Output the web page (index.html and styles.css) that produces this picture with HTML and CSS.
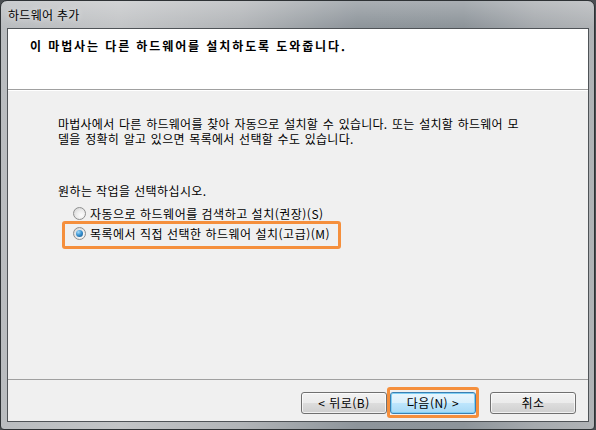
FILE: index.html
```html
<!DOCTYPE html>
<html lang="ko">
<head>
    <meta charset="UTF-8">
    <title>하드웨어 추가</title>
    <link rel="stylesheet" href="styles.css">
</head>
<body>
    <div class="window">
        <div class="titlebar"><span class="title">하드웨어 추가</span></div>
        <div class="client">
            <div class="header">
                <h1>이 마법사는 다른 하드웨어를 설치하도록 도와줍니다.</h1>
            </div>
            <div class="content">
                <p class="intro">
                    <span class="line">마법사에서 다른 하드웨어를 찾아 자동으로 설치할 수 있습니다. 또는 설치할 하드웨어 모</span>
                    <span class="line">델을 정확히 알고 있으면 목록에서 선택할 수도 있습니다.</span>
                </p>
                <p class="ask">원하는 작업을 선택하십시오.</p>
                <label class="option"><span class="radio"></span>자동으로 하드웨어를 검색하고 설치(권장)(S)</label>
                <label class="option option2 marked"><span class="radio checked"></span>목록에서 직접 선택한 하드웨어 설치(고급)(M)</label>
            </div>
            <div class="footer">
                <button class="btn">&lt; 뒤로(B)</button>
                <button class="btn btn-default marked">다음(N) &gt;</button>
                <button class="btn btn-cancel">취소</button>
            </div>
        </div>
    </div>
</body>
</html>
```

FILE: styles.css
```css
*{
    margin: 0;
    padding: 0;
    box-sizing: border-box;
}
body{
    background: #4a4e52;
    font-family: "Noto Sans CJK KR", "Noto Sans", sans-serif;
    font-size: 12px;
    color: #000;
}
.window{
    width: 595px;
    height: 430px;
    border: 1px solid #2e3235;
    border-radius: 7px 7px 4px 4px;
    padding: 0 5px 7px 6px;
    display: flex;
    flex-direction: column;
    background:
        linear-gradient(to bottom, rgba(255,255,255,0.25), rgba(255,255,255,0) 26px),
        linear-gradient(to right, #b9bcbf 0%, #c3c5c7 20%, #b2b5b8 40%, #8e959b 60%, #8d949a 78%, #a6aaae 90%, #b0b3b6 100%);
}
.titlebar{
    height: 27px;
    padding: 6px 0 0 1px;
    line-height: 15px;
}
.title{
    letter-spacing: 0.3px;
    text-shadow: 0 0 6px rgba(255,255,255,0.8);
}
.client{
    height: 394px;
    border: 1px solid #4f5357;
    background: #f0f0f0;
    display: flex;
    flex-direction: column;
}
.header{
    height: 61px;
    background: #fff;
    border-bottom: 1px solid #a0a0a0;
    padding: 9px 0 0 22px;
}
.header h1{
    font-size: 12px;
    font-weight: bold;
    line-height: 15px;
    letter-spacing: 1.9px;
}
.content{
    height: 290px;
    border-top: 1px solid #fff;
    border-bottom: 1px solid #a0a0a0;
    padding: 25px 0 0 50px;
}
.intro{
    letter-spacing: 0.25px;
    word-spacing: 1px;
}
.intro .line{
    display: block;
    height: 15px;
    line-height: 15px;
}
.ask{
    margin-top: 37px;
    line-height: 15px;
    letter-spacing: 0.4px;
}
.option{
    display: flex;
    align-items: center;
    gap: 4px;
    width: fit-content;
    height: 15px;
    margin: 8px 0 0 15px;
    line-height: 15px;
    letter-spacing: 0.5px;
}
.option2{
    margin-top: 5px;
}
.radio{
    width: 13px;
    height: 13px;
    border-radius: 50%;
    border: 1px solid #8e8f8f;
    background: radial-gradient(circle at 65% 65%, #fdfdfd 0%, #ececec 45%, #cfcfcf 100%);
    position: relative;
}
.radio.checked::after{
    content: "";
    position: absolute;
    left: 2px;
    top: 2px;
    width: 7px;
    height: 7px;
    border-radius: 50%;
    background: radial-gradient(circle at 35% 30%, #a6dcfa 0%, #3c95d3 45%, #0d4c82 100%);
}
/* 주황색 강조 표시 */
.marked{
    position: relative;
}
.marked::after{
    content: "";
    position: absolute;
    border: 3px solid #f58f3c;
    border-radius: 3px;
    pointer-events: none;
}
.option.marked::after{
    left: -11px;
    right: -11px;
    top: -5px;
    bottom: -8px;
}
.footer{
    flex: 1;
    display: flex;
    justify-content: flex-end;
    align-items: flex-start;
    padding: 12px 12px 0 0;
}
.btn{
    width: 86px;
    height: 22px;
    border: 1px solid #707070;
    border-radius: 3px;
    background: linear-gradient(to bottom, #f2f2f2 0%, #ebebeb 50%, #dddddd 50%, #cfcfcf 100%);
    box-shadow: inset 0 0 0 1px rgba(255,255,255,0.7);
    font-family: inherit;
    font-size: 12px;
    letter-spacing: 0.5px;
    color: #000;
    line-height: 18px;
}
.btn-default{
    margin-left: 3px;
    border-color: #3c7fb1;
    background: linear-gradient(to bottom, #eaf6fd 0%, #d9f0fc 50%, #bee6fd 50%, #a7d9f5 100%);
    box-shadow: inset 0 0 0 1px #7fd0f5;
}
.btn-default.marked::after{
    left: -4px;
    right: -4px;
    top: -6px;
    bottom: -5px;
}
.btn-cancel{
    margin-left: 14px;
}
```
